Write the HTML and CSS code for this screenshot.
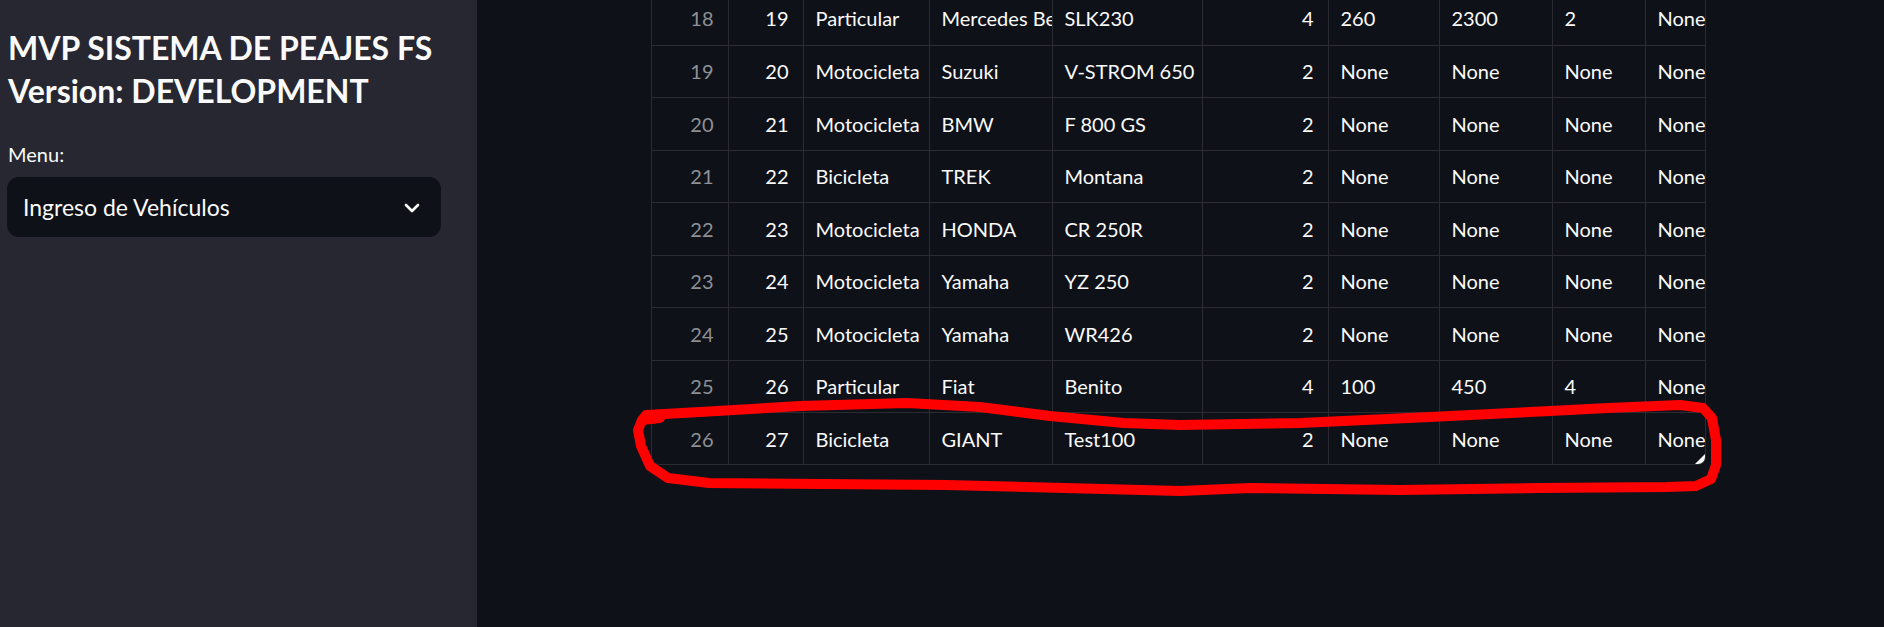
FILE: index.html
```html
<!DOCTYPE html>
<html lang="es">
<head>
<meta charset="utf-8">
<title>MVP Sistema de Peajes FS</title>
<link rel="stylesheet" href="styles.css">
</head>
<body>
<div class="app">
  <aside class="sidebar">
    <h1 class="title">MVP SISTEMA DE PEAJES FS<br>Version: DEVELOPMENT</h1>
    <label class="menu-label">Menu:</label>
    <div class="select">
      <span class="select-text">Ingreso de Vehículos</span>
      <svg class="chev" width="16" height="10" viewBox="0 0 16 10"><path d="M2 2 L8 8 L14 2" fill="none" stroke="#fafafa" stroke-width="2.6" stroke-linecap="round" stroke-linejoin="round"/></svg>
    </div>
  </aside>
  <main class="main">
    <div class="grid-wrap">
      <table class="grid">
        <colgroup>
          <col class="c-idx"><col class="c-id"><col class="c-tipo"><col class="c-marca"><col class="c-modelo"><col class="c-ruedas"><col class="c-a"><col class="c-b"><col class="c-c"><col class="c-d">
        </colgroup>
        <tbody>
          <tr><td class="idx">18</td><td class="num">19</td><td>Particular</td><td>Mercedes Benz</td><td>SLK230</td><td class="num">4</td><td>260</td><td>2300</td><td>2</td><td>None</td></tr>
          <tr><td class="idx">19</td><td class="num">20</td><td>Motocicleta</td><td>Suzuki</td><td>V-STROM 650</td><td class="num">2</td><td>None</td><td>None</td><td>None</td><td>None</td></tr>
          <tr><td class="idx">20</td><td class="num">21</td><td>Motocicleta</td><td>BMW</td><td>F 800 GS</td><td class="num">2</td><td>None</td><td>None</td><td>None</td><td>None</td></tr>
          <tr><td class="idx">21</td><td class="num">22</td><td>Bicicleta</td><td>TREK</td><td>Montana</td><td class="num">2</td><td>None</td><td>None</td><td>None</td><td>None</td></tr>
          <tr><td class="idx">22</td><td class="num">23</td><td>Motocicleta</td><td>HONDA</td><td>CR 250R</td><td class="num">2</td><td>None</td><td>None</td><td>None</td><td>None</td></tr>
          <tr><td class="idx">23</td><td class="num">24</td><td>Motocicleta</td><td>Yamaha</td><td>YZ 250</td><td class="num">2</td><td>None</td><td>None</td><td>None</td><td>None</td></tr>
          <tr><td class="idx">24</td><td class="num">25</td><td>Motocicleta</td><td>Yamaha</td><td>WR426</td><td class="num">2</td><td>None</td><td>None</td><td>None</td><td>None</td></tr>
          <tr><td class="idx">25</td><td class="num">26</td><td>Particular</td><td>Fiat</td><td>Benito</td><td class="num">4</td><td>100</td><td>450</td><td>4</td><td>None</td></tr>
          <tr class="last"><td class="idx">26</td><td class="num">27</td><td>Bicicleta</td><td>GIANT</td><td>Test100</td><td class="num">2</td><td>None</td><td>None</td><td>None</td><td>None</td></tr>
        </tbody>
      </table>
      <span class="resize-handle"></span>
    </div>
  </main>
</div>
<svg class="annotation" width="1884" height="627" viewBox="0 0 1884 627">
  <path d="M642 420 L646 415 L700 412 L800 406 L907 403 L980 407 L1050 416 L1124 423 L1180 425 L1300 423 L1430 417 L1550 411 L1608 408 L1680 405 L1703 408 L1712 418 L1716 440 L1716 465 L1711 479 L1696 486 L1667 487 L1540 488 L1400 490 L1250 488 L1180 491 L946 485 L709 483 L668 478 L650 466 L641 446 L638 430 L642 420 L660 418" fill="none" stroke="#ff0000" stroke-width="10" stroke-linejoin="round" stroke-linecap="round"/>
</svg>
</body>
</html>
```
FILE: styles.css
```css
html, body {
  margin: 0;
  padding: 0;
  background: #0e1117;
  overflow: hidden;
}
.app {
  display: flex;
  width: 1884px;
  height: 627px;
  font-family: Lato, "Liberation Sans", sans-serif;
  color: #fafafa;
}
.sidebar {
  width: 477px;
  flex: 0 0 477px;
  background: #262730;
  box-sizing: border-box;
  padding: 27px 36px 0 8px;
}
.title {
  margin: 0;
  font-size: 32px;
  line-height: 42.5px;
  font-weight: 700;
  white-space: nowrap;
}
.menu-label {
  display: block;
  margin-top: 29px;
  font-size: 20px;
  line-height: 26px;
}
.select {
  margin-top: 10px;
  margin-left: -1px;
  height: 60px;
  width: 434px;
  background: #0e1117;
  border-radius: 12px;
  display: flex;
  align-items: center;
  justify-content: space-between;
  box-sizing: border-box;
  padding: 0 21px 0 16px;
}
.select-text {
  font-size: 23px;
}
.chev {
  display: block;
  margin-top: 2px;
}
.main {
  flex: 1;
  background: #0e1117;
  padding-left: 174px;
}
.grid-wrap {
  position: relative;
  margin-top: -8px;
  width: 1055px;
  height: 473px;
  box-sizing: border-box;
  border: 1px solid #2a2c32;
  border-top: none;
  border-radius: 0 0 8px 8px;
  overflow: hidden;
}
.grid {
  border-collapse: collapse;
  table-layout: fixed;
  width: 1106px;
  font-size: 20px;
}
.c-idx { width: 76px; }
.c-id { width: 75px; }
.c-tipo { width: 126px; }
.c-marca { width: 123px; }
.c-modelo { width: 150px; }
.c-ruedas { width: 126px; }
.c-a { width: 111px; }
.c-b { width: 113px; }
.c-c { width: 93px; }
.c-d { width: 113px; }
.grid td {
  height: 53px;
  box-sizing: border-box;
  padding: 0 0 0 12px;
  border-right: 1px solid #2a2c32;
  border-bottom: 1px solid #2a2c32;
  white-space: nowrap;
  overflow: hidden;
  text-overflow: clip;
  color: #fafafa;
  vertical-align: middle;
}
.grid tr:nth-child(even) td {
  height: 52px;
}
.grid tr.last td {
  border-bottom: none;
}
.grid td.num,
.grid td.idx {
  text-align: right;
  padding: 0 14px 0 0;
}
.grid td.idx {
  color: #8e9096;
}
.resize-handle {
  position: absolute;
  right: 0;
  bottom: 0;
  width: 10px;
  height: 10px;
  background: #fafafa;
  clip-path: polygon(100% 0, 100% 100%, 0 100%);
}
.annotation {
  position: absolute;
  left: 0;
  top: 0;
  pointer-events: none;
}
```
